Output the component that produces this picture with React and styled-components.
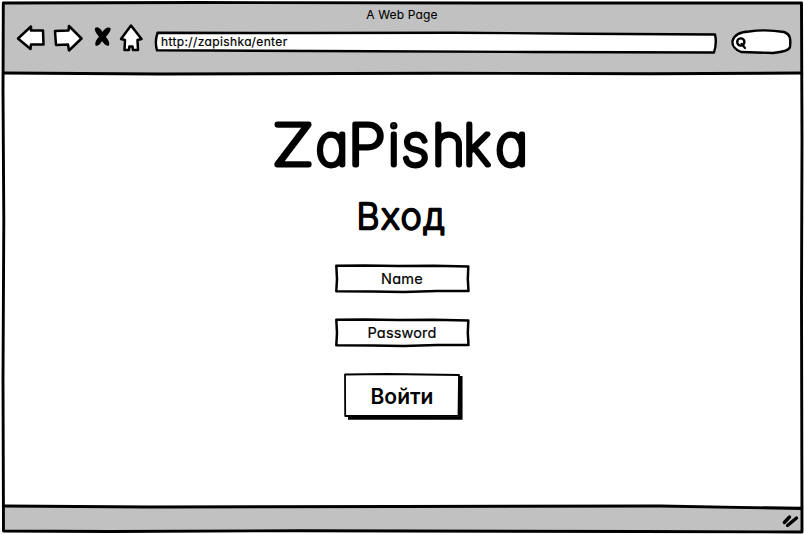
import React from "react";
import styled, { createGlobalStyle } from "styled-components";

const Global = createGlobalStyle`
  * { box-sizing: border-box; }
  body { margin: 0; background: #fff; overflow: hidden; }
`;

const Browser = styled.div`
  position: relative;
  display: grid;
  grid-template-rows: 70px 1fr 26px;
  width: 804px;
  height: 534px;
  padding: 3px 3px 2px 3px;
  color: #000;
  font-family: Inter, "Open Sans", sans-serif;
  font-feature-settings: "cv11" 1;
`;

const Header = styled.header`
  display: grid;
  grid-template-rows: 23px 1fr;
  background: #c1c1c1;
`;

const Label = styled.span`
  display: block;
  white-space: nowrap;
  font-size: ${(p) => p.$size}px;
  font-weight: ${(p) => p.$weight || 400};
  line-height: 1.2;
  letter-spacing: ${(p) => p.$spacing || 0}px;
  -webkit-text-stroke: ${(p) => p.$stroke || 0}px #000;
`;

const PageTitle = styled.div`
  display: flex;
  justify-content: center;
  padding: 5px 0 0 0;
`;

const Toolbar = styled.nav`
  display: flex;
  align-items: flex-start;
  padding-left: 13px;
`;

const Drawing = styled.svg`
  display: block;
  flex: none;
  overflow: visible;
  fill: #fff;
  stroke: #000;
  stroke-width: ${(p) => p.$line || 2.6};
  stroke-linejoin: round;
  stroke-linecap: round;
`;

const Overlay = styled(Drawing)`
  position: absolute;
  inset: 0;
  fill: none;
  pointer-events: none;
`;

const Address = styled.div`
  position: relative;
  flex: none;
  width: 564px;
  height: 24px;
  margin: 4px 0 0 5px;
  padding: 5px 0 0 8px;
`;

const Search = styled.div`
  margin: 3px 0 0 14px;
`;

const Content = styled.main`
  display: flex;
  flex-direction: column;
  align-items: center;
  background: #fff;
`;

const Brand = styled.h1`
  margin: 41px 0 0 -2px;
  width: 260px;
  height: 62px;
`;

const MarkerText = styled.text`
  font-family: Inter, "Open Sans", sans-serif;
  font-size: ${(p) => p.$size}px;
  font-weight: ${(p) => p.$weight};
  font-feature-settings: "cv11" 1;
  fill: #000;
  stroke: #000;
  stroke-width: ${(p) => p.$stroke}px;
`;

const Heading = styled.h2`
  margin: 19px 0 0;
  height: 69px;
`;

const Form = styled.form`
  display: flex;
  flex-direction: column;
  align-items: center;
`;

const Field = styled.div`
  position: relative;
  display: flex;
  justify-content: center;
  align-items: center;
  width: 136px;
  height: 30px;
  margin: 0 0 24px;
`;

const Submit = styled.button`
  position: relative;
  display: flex;
  justify-content: center;
  align-items: center;
  width: 120px;
  height: 48px;
  padding: 1px 0 0;
  border: 0;
  background: transparent;
  color: #000;
  font: inherit;
  font-feature-settings: inherit;
`;

const Above = styled.span`
  position: relative;
`;

const Footer = styled.footer`
  display: flex;
  justify-content: flex-end;
  align-items: center;
  padding: 4px 3px 0 0;
  background: #c1c1c1;
`;

function FieldBox({ children, size, spacing }) {
  return (
    <Field>
      <Overlay width="136" height="30" viewBox="0 0 136 30" $line={2.5}>
        <path d="M2.3 1.8 L30 1.5 L65 2.1 L100 1.7 L134.3 2.5 L133.8 15 L134.5 27 L103 27 L70 28 L38 27.6 L2.3 27.3 L3 15 Z" />
      </Overlay>
      <Label $size={size} $spacing={spacing} $stroke={0.2}>{children}</Label>
    </Field>
  );
}

export default function App() {
  return (
    <>
      <Global />
      <Browser>
        <Header>
          <PageTitle>
            <Label $size={12} $spacing={0.15} $stroke={0.1}>A Web Page</Label>
          </PageTitle>
          <Toolbar>
            <Drawing width="132" height="30" viewBox="16 26 132 30" $line={2.5}>
              <path d="M18 38.5 L31 26.5 L31 30.5 L43 30.5 L43.5 44.5 L31 44.5 L30.5 49 Z" />
              <path d="M55 31 L68.5 30.5 L69 26 L81.5 38.5 L69 50.5 L68 44.5 L56 45 Z" />
              <path
                fill="#000"
                strokeWidth="1.3"
                d="M95.5 28.5 Q98.5 26.5 102.5 33 Q106.5 27 110 28.5 Q110.5 31 105 37 Q109.5 42 108.5 45 Q105.5 46 102 39.8 Q99 46 96 45 Q95 42 100 36.5 Q95 31.5 95.5 28.5 Z"
              />
              <path d="M131 25.5 L121 39 L125 40 L124.5 50 L129 50 L129.3 46.5 L132.5 46.5 L133 50 L138 50 L137.5 40 L141.5 39 Z" />
            </Drawing>
            <Address>
              <Overlay width="564" height="24" viewBox="0 0 564 24" $line={2.4}>
                <path fill="#fff" d="M4.5 2.8 L150 3 L300 2.7 L430 3.7 L562 4.5 Q564 13 561 22.5 L380 22 L220 21.2 L4 20.3 Q1.5 12 4.5 2.8 Z" />
              </Overlay>
              <Above>
                <Label $size={12} $spacing={0.38} $stroke={0.2}>http://zapishka/enter</Label>
              </Above>
            </Address>
            <Search>
              <Drawing width="62" height="26" viewBox="731 29 62 26" $line={2.4}>
                <path d="M749 31.5 C762 29.5 775 30.5 784 32 C790 34 791 38 790 47 C789 51 781 52 773 53 L741 52 C734 49 732 46 732.5 41 C734 35 739 32 749 31.5 Z" />
                <circle cx="740.8" cy="42" r="3.6" fill="none" strokeWidth="2.4" />
                <path d="M741.5 43.8 L745 48" strokeWidth="2.2" />
              </Drawing>
            </Search>
          </Toolbar>
        </Header>
        <Content>
          <Brand>
            <Drawing width="260" height="62" viewBox="270 114 260 62">
              <MarkerText $size={56} $weight={100} $stroke={4.9} x="271.2 314.8 347 386.7 400.5 431.3 462.3 494.5" y="164.5">
                <tspan textLength="41.5" lengthAdjust="spacingAndGlyphs">Z</tspan>a
                <tspan textLength="37.5" lengthAdjust="spacingAndGlyphs">P</tspan>ishka
              </MarkerText>
            </Drawing>
          </Brand>
          <Heading>
            <Drawing width="92" height="48" viewBox="356 196 92 48">
              <MarkerText $size={35.5} $weight={200} $stroke={2.5} x="356.5" y="230" textLength="88">Вход</MarkerText>
            </Drawing>
          </Heading>
          <Form>
            <FieldBox size={14.5} spacing={0.3}>Name</FieldBox>
            <FieldBox size={14.5} spacing={0.15}>Password</FieldBox>
            <Submit type="button">
              <Overlay width="120" height="48" viewBox="0 0 120 48" $line={1.8}>
                <path d="M118.8 4 L118.8 46 L6 46" strokeWidth="3.5" strokeLinejoin="miter" strokeLinecap="butt" />
                <path fill="#fff" d="M3 2.5 L45 2 L117 3 L116.5 43.8 L60 44 L3.2 44 Z" />
              </Overlay>
              <Above>
                <Label $size={21} $weight={600}>Войти</Label>
              </Above>
            </Submit>
          </Form>
        </Content>
        <Footer>
          <Drawing width="16" height="14" viewBox="782 514 16 14" $line={3.4}>
            <path d="M784.3 522.5 L789.5 517 M787.5 525.5 L796.5 518" />
          </Drawing>
        </Footer>
        <Overlay width="804" height="534" viewBox="0 0 804 534" $line={2.9}>
          <path d="M3.3 3 L200 2.5 L480 3 L801.5 3 L802 140 L801.5 300 L802 532 L640 531.5 L300 530.7 L110 531.5 L3.5 531 L3 380 L3.8 220 L3 90 Z" />
          <path d="M4 73 L160 74 L440 73.2 L650 73.8 L801 73 M4 506 L150 507 L400 506.5 L660 506 L801 508.5" />
        </Overlay>
      </Browser>
    </>
  );
}
